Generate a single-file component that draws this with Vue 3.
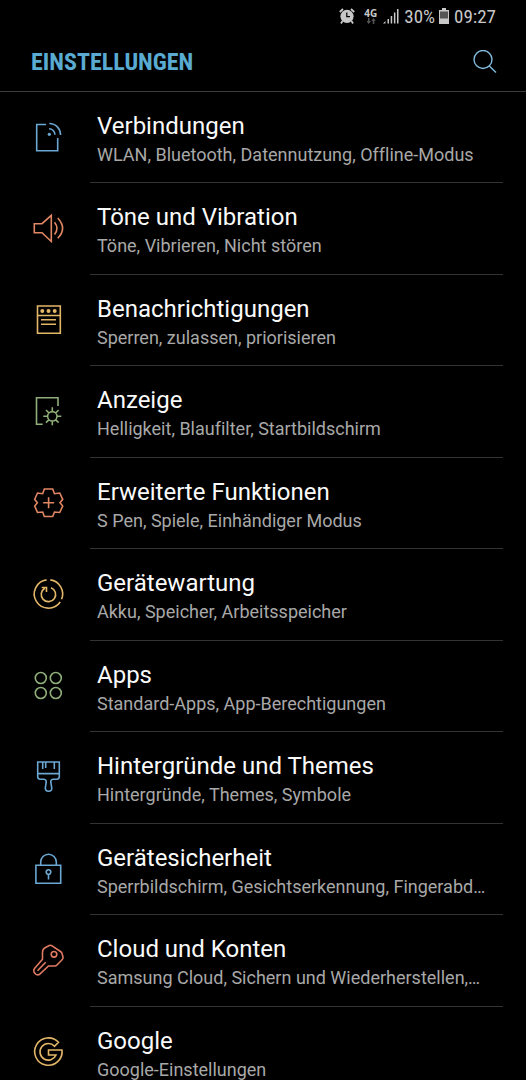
<template>
  <div class="settings">
    <div class="statusbar">
      <svg class="alarm" width="16" height="16" viewBox="0 0 16 16">
        <circle cx="8" cy="8.300" r="6.600" fill="currentColor" />
        <path d="M.8 4 4 1M12 1l3.200 3M3.500 13 2 15.400M12.500 13l1.500 2.400" stroke="currentColor" stroke-width="1.8" />
        <path d="M7.800 4.500V8.700H11" fill="none" stroke="#000" stroke-width="1.200" />
      </svg>
      <div class="network">
        <span>4G</span>
        <svg width="10" height="6" viewBox="0 0 10 6" fill="#555">
          <path d="M2 0h1.500v3H5L2.700 6 .5 3H2zM6.800 6h1.500V3h1.300L7.500 0 5.300 3h1.500z" />
        </svg>
      </div>
      <svg class="signal" width="16" height="16" viewBox="0 0 16 16" fill="currentColor">
        <path d="M0 15.500 2.500 13v2.500zM4.500 11h1.500v4.500H4.500zM7.700 8h1.500v7.500H7.700zM10.900 4.500h1.500v11h-1.500zM14 1h1.500v14.500H14z" />
      </svg>
      <span class="percent">30%</span>
      <svg class="battery" width="10" height="16" viewBox="0 0 10 16">
        <path d="M0 2h3V0h4v2h3v14H0z" fill="currentColor" />
        <path d="M1 3.500h8v7H1z" fill="#555" />
      </svg>
      <span>09:27</span>
    </div>

    <header class="header">
      <h1>EINSTELLUNGEN</h1>
      <button type="button" class="search" aria-label="Suchen">
        <svg width="24" height="24" viewBox="0 0 24 24" fill="none" stroke="currentColor" stroke-width="1.4">
          <circle cx="10" cy="9.500" r="9" />
          <path d="M16.300 16 23 22.500" />
        </svg>
      </button>
    </header>

    <ul class="list">
      <li v-for="item in items" :key="item.title">
        <a href="#" class="row">
          <svg class="icon" :class="item.color" width="32" height="32" viewBox="0 0 32 32">
            <path :d="item.path" />
            <path v-if="item.fill" class="solid" :d="item.fill" />
          </svg>
          <span class="text">
            <span class="title">{{ item.title }}</span>
            <span class="summary">{{ item.summary }}</span>
          </span>
        </a>
      </li>
    </ul>
  </div>
</template>

<script setup>
// path = outline of the icon, fill = filled details
const items = [
  {
    title: 'Verbindungen',
    summary: 'WLAN, Bluetooth, Datennutzung, Offline-Modus',
    color: 'blue',
    path: 'M13 3.500H3.700V29.700H24.700V17M16 7.800A6 6 0 0 1 22 13.700M16.300 2.500A11.400 11.400 0 0 1 27.600 14',
    fill: 'M14.700 13.300a1.600 1.600 0 1 0 3.200 0a1.600 1.600 0 1 0-3.200 0'
  },
  {
    title: 'Töne und Vibration',
    summary: 'Töne, Vibrieren, Nicht stören',
    color: 'orange',
    path: 'M1.300 11.700H9L18.300 3.300V29.500L9 20.700H1.300ZM21.500 10.300Q26.500 16.500 21.500 22.500M24.700 6Q34.500 16.500 24.700 26.300'
  },
  {
    title: 'Benachrichtigungen',
    summary: 'Sperren, zulassen, priorisieren',
    color: 'yellow',
    path: 'M4.500 2H27.300V29.300H4.500ZM4.500 11.500H27.300M8 15.700H23M8 20.300H23',
    fill: 'M7.300 7a2 2 0 1 0 4 0a2 2 0 1 0-4 0M13.500 7a2 2 0 1 0 4 0a2 2 0 1 0-4 0M19.700 7a2 2 0 1 0 4 0a2 2 0 1 0-4 0'
  },
  {
    title: 'Anzeige',
    summary: 'Helligkeit, Blaufilter, Startbildschirm',
    color: 'green',
    path: 'M9.700 29.300H3.500V2.700H25V11M14.600 21.300a4.700 4.700 0 1 0 9.400 0a4.700 4.700 0 1 0-9.400 0M19.300 12.300v4.300M19.300 26v4.300M10.300 21.300h4.300M24 21.300h4.300M13 15l3 3M22.600 24.600l3 3M13 27.600l3-3M22.600 18l3-3'
  },
  {
    title: 'Erweiterte Funktionen',
    summary: 'S Pen, Spiele, Einhändiger Modus',
    color: 'orange',
    path: 'M11.300 2H19.700L21.500 6.700L26.700 6L29.700 12.300L27 15.700L29.700 19L26.700 25.500L21.500 25L19.700 29.500H11.300L9.700 25L4.500 25.500L1.700 19L4.300 15.700L1.700 12.300L4.500 6L9.700 6.700ZM15.600 10.300V21.300M10.200 15.700H21.200'
  },
  {
    title: 'Gerätewartung',
    summary: 'Akku, Speicher, Arbeitsspeicher',
    color: 'yellow',
    path: 'M17.300 1.900A14.200 14.200 0 0 1 28.600 21.300M27.200 24A14.200 14.200 0 1 1 13.600 1.900M18 9.700A7.200 7.200 0 1 1 11.800 10.200M8.700 9.500H13.500V14'
  },
  {
    title: 'Apps',
    summary: 'Standard-Apps, App-Berechtigungen',
    color: 'green',
    path: 'M2.300 8a5.500 5.500 0 1 0 11 0a5.500 5.500 0 1 0-11 0M17.300 8a5.500 5.500 0 1 0 11 0a5.500 5.500 0 1 0-11 0M2.300 23a5.500 5.500 0 1 0 11 0a5.500 5.500 0 1 0-11 0M17.300 23a5.500 5.500 0 1 0 11 0a5.500 5.500 0 1 0-11 0'
  },
  {
    title: 'Hintergründe und Themes',
    summary: 'Hintergründe, Themes, Symbole',
    color: 'blue',
    path: 'M4.700 1H26.300V15.500Q26.300 18.300 23.500 18.300H20Q17.500 18.500 17.800 21.500L18.800 27Q18.800 30.300 15.500 30.300Q12.300 30.300 12.300 27L13.200 21.500Q13.500 18.500 11 18.300H7.500Q4.700 18.300 4.700 15.500ZM4.700 12.600H26.300M9.700 1V8M12.700 1V7M21.300 1V8'
  },
  {
    title: 'Gerätesicherheit',
    summary: 'Sperrbildschirm, Gesichtserkennung, Fingerabd…',
    color: 'blue',
    path: 'M2.900 12.300H27.700V30.300H2.900ZM7.700 12V9A7.800 7.800 0 0 1 23.300 9V12M13.200 19a2.300 2.300 0 1 0 4.600 0a2.300 2.300 0 1 0-4.600 0M15.500 21.300V26.500'
  },
  {
    title: 'Cloud und Konten',
    summary: 'Samsung Cloud, Sichern und Wiederherstellen,…',
    color: 'red',
    path: 'M12 3.700L16.300 1.500Q17.700 1 19 1.800L27.500 7.500Q28.700 8.300 29 9.500L30 13Q30.300 14.500 29.300 15.500L24 21Q23 22 21.700 22H15.500L6.300 30.500Q4.300 31.500 2.500 30L1 28Q.2 26.300 1.500 24.500L9.500 15.300V8.500Q9.500 5 12 3.700ZM18.200 10.300a2.800 2.800 0 1 0 5.600 0a2.800 2.800 0 1 0-5.600 0M4.500 26.800L12.700 18.300'
  },
  {
    title: 'Google',
    summary: 'Google-Einstellungen',
    color: 'yellow',
    path: 'M25.500 6.300A13.700 13.700 0 1 0 29 14H15.500V19H23A8.300 8.300 0 1 1 21.500 10.300Z'
  }
]
</script>

<style>
body {
  background: #000;
}
</style>

<style scoped>
.settings {
  height: 100vh;
  overflow: hidden;
  background: #000;
  color: #fafafa;
  font-family: Roboto, "Noto Sans", sans-serif;
}

.statusbar {
  display: flex;
  align-items: center;
  justify-content: flex-end;
  height: 32px;
  padding-right: 30px;
  color: #c8c8c8;
  font-family: "Roboto Condensed", "Liberation Sans Narrow", Roboto, sans-serif;
  font-size: 19px;
}
.network {
  display: flex;
  flex-direction: column;
  align-items: center;
  margin: 0 6px 0 9px;
  font-family: "Open Sans", sans-serif;
  font-size: 10px;
  font-weight: 700;
  line-height: 10px;
}
.percent { margin: 0 4px 0 5px; }
.battery { margin-right: 5px; }

.header {
  display: flex;
  align-items: center;
  justify-content: space-between;
  height: 59px;
  padding: 0 29px 0 31px;
  border-bottom: 1px solid #3a3a3a;
}
.header h1 {
  margin: 0;
  color: #5aabd2;
  font-family: "Roboto Condensed", "Liberation Sans Narrow", Roboto, sans-serif;
  font-size: 24px;
  font-weight: 700;
}
.search {
  display: flex;
  padding: 0;
  border: 0;
  background: none;
  color: #82bbdc;
}

.list {
  margin: 0;
  padding: 0;
  list-style: none;
}
.row {
  display: flex;
  height: 91px;
  color: inherit;
  text-decoration: none;
}
li:nth-child(even) .row { height: 92px; }
.icon {
  flex: none;
  margin: 29px 25px 0 33px;
  overflow: visible;
  fill: none;
  stroke: currentColor;
  stroke-width: 1.6;
}
.solid {
  fill: currentColor;
  stroke: none;
}
.blue { color: #6ba7d3; }
.orange { color: #e28763; }
.yellow { color: #e3b768; }
.green { color: #8fae79; }
.red { color: #e07a62; }

.text {
  display: flex;
  flex: 1;
  flex-direction: column;
  min-width: 0;
  margin-right: 23px;
  padding: 19px 8px 0 7px;
  border-bottom: 1px solid #333;
}
.title {
  font-size: 24px;
  line-height: 30px;
}
.summary {
  overflow: hidden;
  color: #a8a8a8;
  font-size: 18px;
  font-variant-ligatures: none;
  line-height: 28px;
  text-overflow: ellipsis;
  white-space: nowrap;
}
</style>
